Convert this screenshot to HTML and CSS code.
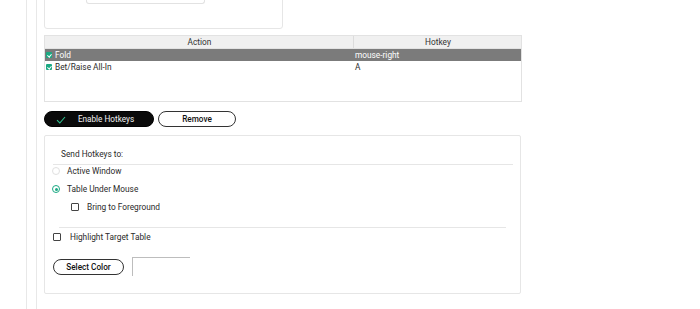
FILE: index.html
```html
<!DOCTYPE html>
<html lang="en">
<head>
    <meta charset="utf-8">
    <title>Hotkeys</title>
    <link rel="stylesheet" href="styles.css">
</head>
<body>
<div class="outer">
    <div class="panel">
        <div class="top-box">
            <div class="top-inner"></div>
        </div>

        <div class="table">
            <div class="row head">
                <div class="col-action">Action</div>
                <div class="col-key">Hotkey</div>
            </div>
            <div class="row selected">
                <div class="col-action"><span class="tick"></span>Fold</div>
                <div class="col-key">mouse-right</div>
            </div>
            <div class="row">
                <div class="col-action"><span class="tick"></span>Bet/Raise All-In</div>
                <div class="col-key">A</div>
            </div>
        </div>

        <div class="buttons">
            <button type="button" class="btn btn-dark">
                <svg class="btn-check" width="10" height="8" viewBox="0 0 10 8"><path d="M1 4.2 L3.8 7 L9 1" fill="none" stroke="#2fbf8f" stroke-width="1.1"/></svg>
                Enable Hotkeys
            </button>
            <button type="button" class="btn btn-light">Remove</button>
        </div>

        <div class="settings">
            <div class="settings-title">Send Hotkeys to:</div>
            <div class="option first">
                <span class="radio"></span>Active Window
            </div>
            <div class="option">
                <span class="radio on"></span>Table Under Mouse
            </div>
            <div class="option sub">
                <span class="box"></span>Bring to Foreground
            </div>
            <div class="divider"></div>
            <div class="option highlight">
                <span class="box"></span>Highlight Target Table
            </div>
            <div class="color-row">
                <button type="button" class="btn btn-light btn-color">Select Color</button>
                <div class="swatch"></div>
            </div>
        </div>
    </div>
</div>
</body>
</html>
```

FILE: styles.css
```css
* {
    box-sizing: border-box;
    margin: 0;
    padding: 0;
}
html, body {
    height: 100%;
    overflow: hidden;
    background: #fff;
}
body {
    font-family: Roboto, "Liberation Sans", sans-serif;
    font-size: 8.3px;
    color: #2a2a2a;
}
.outer {
    margin-left: 26px;
    height: 100%;
    border-left: 1px solid #e8e8e8;
    padding-left: 9px;
}
.panel {
    display: flow-root;
    height: 100%;
    border-left: 1px solid #e8e8e8;
    padding-left: 7px;
}
.top-box {
    width: 239px;
    height: 60px;
    margin-top: -31px;
    border: 1px solid #e6e6e6;
    border-radius: 3px;
    padding-left: 41px;
}
.top-inner {
    width: 119px;
    height: 34px;
    border: 1px solid #e2e2e2;
    border-top: 0;
    border-radius: 0 0 3px 3px;
}
.table {
    margin-top: 6px;
    width: 478px;
    height: 67px;
    border: 1px solid #e2e2e2;
}
.row {
    display: flex;
    height: 12px;
    line-height: 12px;
}
.row.head {
    background: #f0f0f0;
    border-bottom: 1px solid #e2e2e2;
    height: 13px;
    color: #333;
}
.row.head .col-action,
.row.head .col-key {
    display: block;
    text-align: center;
}
.row.head .col-action {
    border-right: 1px solid #dcdcdc;
}
.row.selected {
    background: #7b7b7b;
    color: #fff;
}
.col-action {
    width: 309px;
    padding-left: 1px;
    display: flex;
    align-items: center;
}
.col-key {
    flex: 1;
    padding-left: 1px;
}
.tick {
    width: 6px;
    height: 6px;
    margin-right: 3px;
    border-radius: 1px;
    background: #1ba983;
    position: relative;
}
.tick::after {
    content: "";
    position: absolute;
    left: 2px;
    top: 0.5px;
    width: 1.5px;
    height: 3px;
    border: solid #fff;
    border-width: 0 1px 1px 0;
    transform: rotate(40deg);
}
.buttons {
    display: flex;
    gap: 4px;
    margin-top: 9px;
}
.btn {
    height: 16px;
    border-radius: 8px;
    font-family: Roboto, "Liberation Sans", sans-serif;
    font-size: 8.2px;
    display: flex;
    align-items: center;
    justify-content: center;
}
.btn-dark {
    width: 110px;
    background: #0a0a0a;
    color: #f2f2f2;
    border: 1px solid #000;
    position: relative;
    padding-left: 14px;
}
.btn-check {
    position: absolute;
    left: 11px;
    top: 4px;
}
.btn-light {
    width: 78px;
    background: #fff;
    color: #111;
    border: 1px solid #333;
    font-weight: 500;
}
.settings {
    margin-top: 8px;
    width: 477px;
    height: 159px;
    border: 1px solid #e6e6e6;
    border-radius: 2px;
    padding: 13px 7px 0 8px;
}
.settings-title {
    padding-left: 8px;
    height: 16px;
    border-bottom: 1px solid #e6e6e6;
}
.option {
    display: flex;
    align-items: center;
    height: 18px;
}
.option.first {
    margin-top: -3px;
}
.radio {
    width: 8px;
    height: 8px;
    border-radius: 50%;
    border: 1px solid #e0e0e0;
    margin: 0 7px 0 -1px;
    position: relative;
}
.radio.on {
    border-color: #1ba983;
}
.radio.on::after {
    content: "";
    position: absolute;
    left: 1.5px;
    top: 1.5px;
    width: 3px;
    height: 3px;
    border-radius: 50%;
    background: #1ba983;
}
.box {
    width: 8px;
    height: 8px;
    border: 1px solid #444;
    border-radius: 1px;
    margin-right: 8px;
}
.option.sub {
    padding-left: 18px;
}
.divider {
    margin: 11px 7px 0 6px;
    border-top: 1px solid #e6e6e6;
}
.option.highlight .box {
    margin-right: 9px;
}
.color-row {
    display: flex;
    align-items: flex-start;
    gap: 8px;
    margin-top: 11px;
}
.btn-color {
    width: 71px;
    margin-top: 2px;
}
.swatch {
    width: 58px;
    height: 19px;
    border-top: 1px solid #bdbdbd;
    border-left: 1px solid #bdbdbd;
}
```
